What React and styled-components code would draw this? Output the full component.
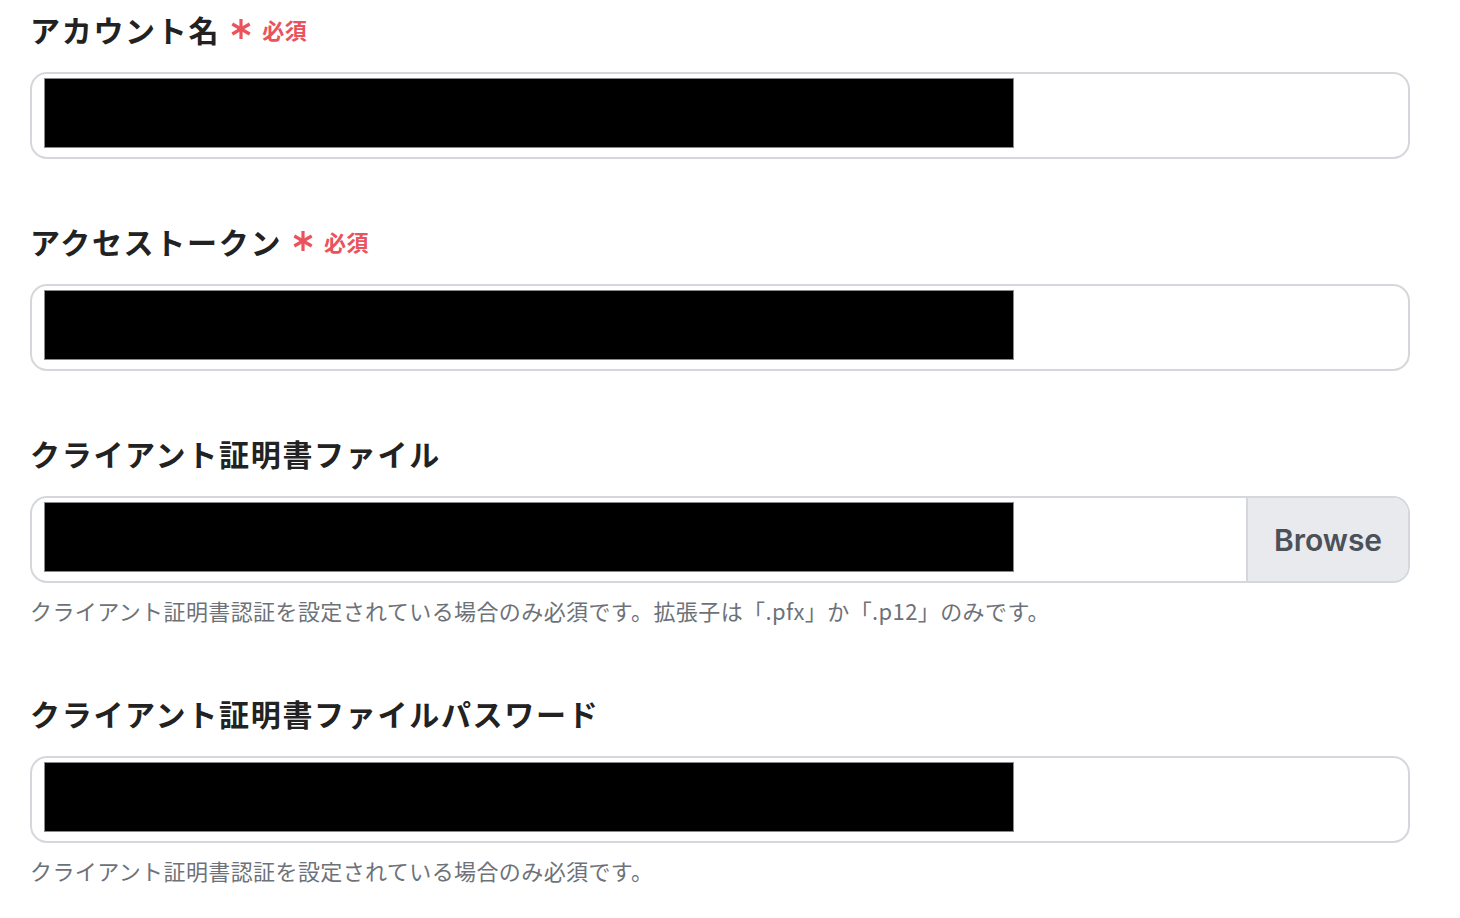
import React from "react";
import styled, { createGlobalStyle } from "styled-components";

const Global = createGlobalStyle`
  html, body { margin: 0; padding: 0; background: #ffffff; }
  body { font-family: "Noto Sans CJK JP", "Noto Sans", sans-serif; }
`;

const Form = styled.div`
  width: 1380px;
  padding: 8px 0 0 30px;
  display: flex;
  flex-direction: column;
`;

const Field = styled.div`
  display: flex;
  flex-direction: column;
  margin-bottom: ${(p) => (p.$hasHelp ? "69px" : "61px")};
`;

const Label = styled.div`
  display: flex;
  align-items: center;
  height: 42px;
  margin-bottom: 22px;
  font-size: 30px;
  font-weight: 700;
  color: #222222;
  letter-spacing: 1.7px;
`;

const Required = styled.span`
  display: inline-flex;
  align-items: center;
  margin-left: 10px;
  color: #ea525c;
  font-size: 22px;
  font-weight: 700;
  letter-spacing: 0.5px;
`;

const Star = styled.svg`
  width: 22px;
  height: 22px;
  margin-right: 10px;
`;

const InputBox = styled.div`
  box-sizing: border-box;
  height: 87px;
  border: 2px solid #d4d7dc;
  border-radius: 17px;
  display: flex;
  align-items: stretch;
  overflow: hidden;
  background: #fff;
`;

const Value = styled.div`
  flex: 1;
  display: flex;
  align-items: flex-start;
  padding: 5px 0 0 13px;
`;

const Redact = styled.div`
  width: 968px;
  height: 68px;
  background: #000;
  box-shadow: 0 0 0 1px #8a8a8a;
`;

const BrowseButton = styled.div`
  width: 160px;
  background: #e9eaee;
  border-left: 2px solid #d4d7dc;
  display: flex;
  align-items: center;
  justify-content: center;
  font-family: Inter, "Noto Sans", sans-serif;
  font-size: 30px;
  font-weight: 600;
  color: #4b5159;
  padding-top: 1px;
`;

const Help = styled.div`
  margin-top: 14px;
  font-size: 22px;
  line-height: 26px;
  color: #6d7279;
  letter-spacing: 0.4px;
`;

function Asterisk() {
  return (
    <Star viewBox="0 0 22 22">
      <g stroke="#ea525c" strokeWidth="3.2" strokeLinecap="butt">
        <line x1="11" y1="1" x2="11" y2="21" />
        <line x1="2.3" y1="6" x2="19.7" y2="16" />
        <line x1="2.3" y1="16" x2="19.7" y2="6" />
      </g>
    </Star>
  );
}

function FormField({ label, required, help, browse }) {
  return (
    <Field $hasHelp={!!help}>
      <Label>
        {label}
        {required && (
          <Required>
            <Asterisk />
            必須
          </Required>
        )}
      </Label>
      <InputBox>
        <Value>
          <Redact />
        </Value>
        {browse && <BrowseButton>Browse</BrowseButton>}
      </InputBox>
      {help && <Help>{help}</Help>}
    </Field>
  );
}

export default function App() {
  return (
    <>
      <Global />
      <Form>
        <FormField label="アカウント名" required />
        <FormField label="アクセストークン" required />
        <FormField
          label="クライアント証明書ファイル"
          browse
          help="クライアント証明書認証を設定されている場合のみ必須です。拡張子は「.pfx」か「.p12」のみです。"
        />
        <FormField
          label="クライアント証明書ファイルパスワード"
          help="クライアント証明書認証を設定されている場合のみ必須です。"
        />
      </Form>
    </>
  );
}
